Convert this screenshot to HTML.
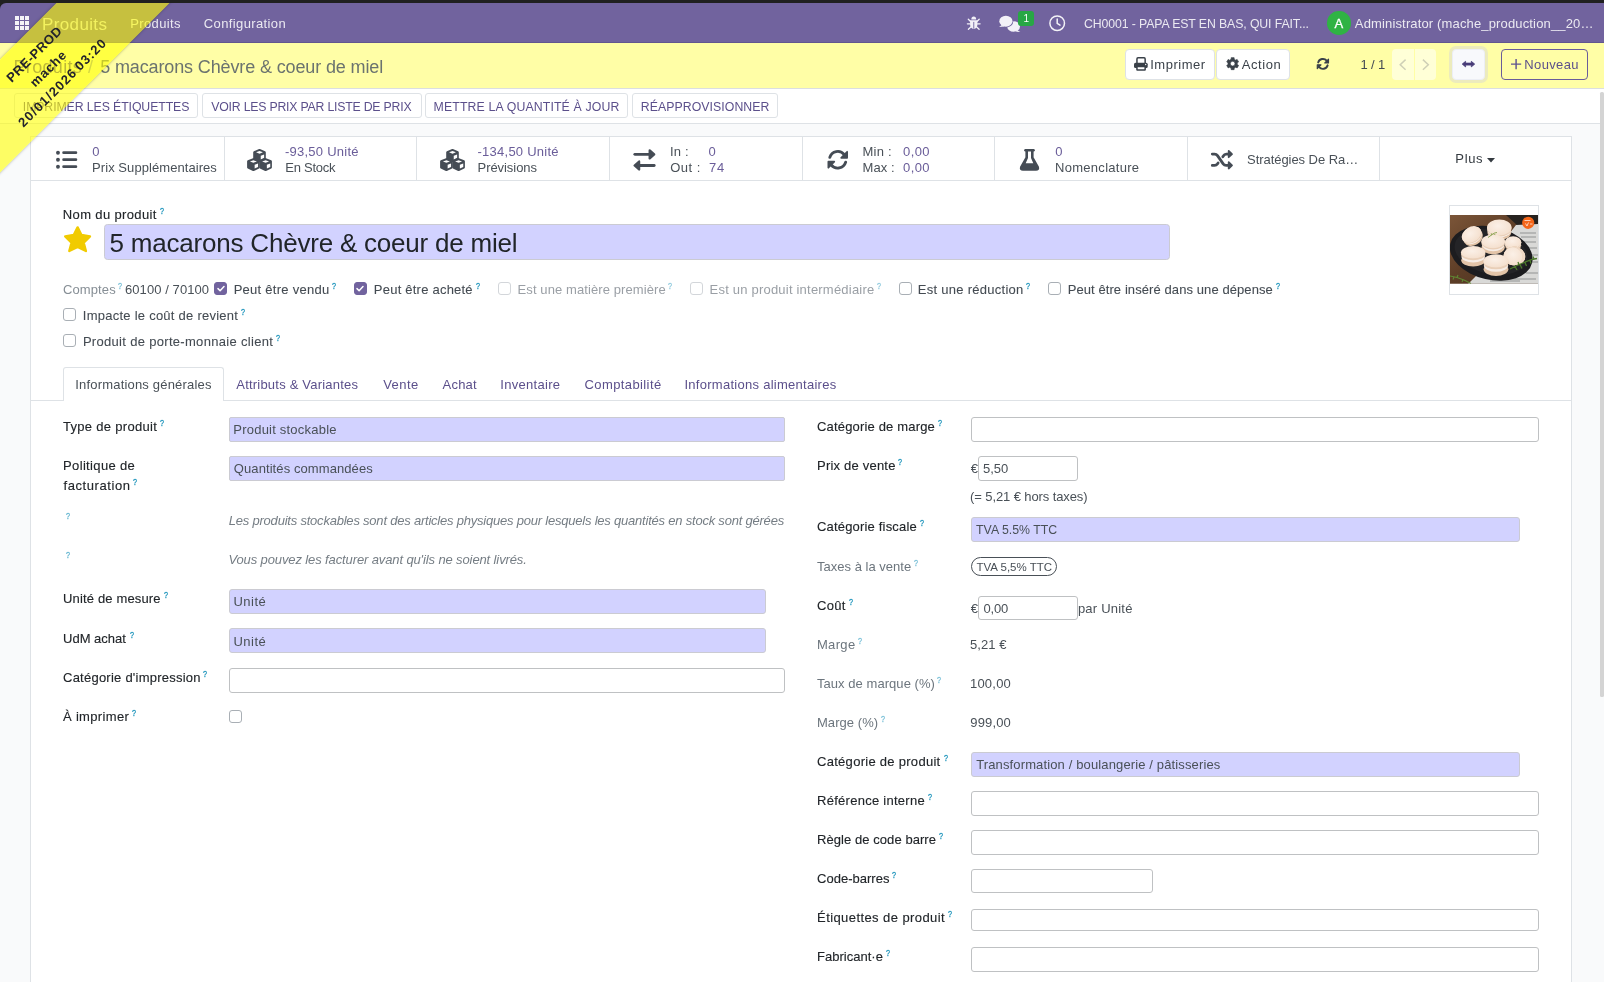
<!DOCTYPE html>
<html lang="fr"><head><meta charset="utf-8"><title>Produits</title>
<style>
*{box-sizing:border-box;margin:0;padding:0}
html,body{width:1604px;height:982px;overflow:hidden;background:#202020}
body{font-family:"Liberation Sans",sans-serif;font-size:13px;color:#495057}
#app{position:absolute;left:0;top:0;width:1604px;height:982px;overflow:hidden;background:#202020}
.a{position:absolute}
.t{position:absolute;white-space:pre;line-height:20px;height:20px}
#nav{left:0;top:3px;width:1604px;height:40px;background:#71639e;border-top-left-radius:6px}
#cp{left:0;top:43px;width:1604px;height:45px;background:#fffea6}
#cpb{left:0;top:88px;width:1604px;height:1px;background:#dcdfe0}
#sb{left:0;top:89px;width:1604px;height:34px;background:#fff}
#sbb{left:0;top:123px;width:1604px;height:1px;background:#dee2e6}
#bg{left:0;top:124px;width:1604px;height:858px;background:#f9fafb}
#sheet{left:30px;top:136px;width:1542px;height:860px;background:#fff;border:1px solid #dee2e6}
.btn{border:1px solid #dee2e6;border-radius:3px;background:#fff}
.sep{width:1px;background:#dee2e6}
.req{background:#d2d2ff;border:1px solid #cbcbd2;border-radius:3px}
.inp{background:#fff;border:1px solid #bfc1c3;border-radius:3px}
.cb{width:13px;height:13px;border:1px solid #a9afb5;border-radius:3px;background:#fff}
.cb.on{background:#71639e;border-color:#71639e}
.cb.dis{border-color:#d3d6da}
svg{position:absolute;overflow:visible}
#tx{position:absolute;left:0;top:0;width:1604px;height:982px;will-change:transform}

</style></head>
<body>
<div id="app">
<div class="a" id="nav"></div>
<div class="a" style="left:0;top:42px;width:1604px;height:1px;background:#62568f"></div>
<div class="a" id="cp"></div>
<div class="a" id="cpb"></div>
<div class="a" id="sb"></div>
<div class="a" id="sbb"></div>
<div class="a" id="bg"></div>
<div class="a" id="sheet"></div>
<!-- scrollbar -->
<div class="a" style="left:1600.400px;top:91.500px;width:3.200px;height:605.500px;background:#d4d4d4;border-radius:1.600px"></div>

<!-- NAV ICONS -->
<svg id="i-apps" style="left:15px;top:16px" width="14" height="14" viewBox="0 0 14 14" fill="#fff" fill-opacity=".92"><rect x="0" y="0" width="4" height="4"/><rect x="5" y="0" width="4" height="4"/><rect x="10" y="0" width="4" height="4"/><rect x="0" y="5" width="4" height="4"/><rect x="5" y="5" width="4" height="4"/><rect x="10" y="5" width="4" height="4"/><rect x="0" y="10" width="4" height="4"/><rect x="5" y="10" width="4" height="4"/><rect x="10" y="10" width="4" height="4"/></svg>
<svg id="i-bug" style="left:966px;top:15px" width="16" height="16" viewBox="966 15 16 16" fill="#f3f1f8" stroke="#f3f1f8" stroke-width="1.300" stroke-linecap="round"><path d="M971.300 19.400a2.450 2.900 0 0 1 4.900 0z" stroke="none"/><path d="M970.100 20.200H977.400V24.500Q977.400 28.200 973.750 29.100Q970.100 28.200 970.100 24.500z" stroke="none"/><path d="M973.750 22.300V28.300" stroke="#71639e" stroke-width=".9"/><path d="M970.600 21.500L968.300 19.300M976.900 21.500L979.200 19.300M970 23.800H967.400M977.500 23.800H980.100M970.900 27L968.400 29.200M976.600 27L979.100 29.200" fill="none"/></svg>
<svg id="i-chat" style="left:998px;top:14px" width="24" height="20" viewBox="998 14 24 20" fill="#f3f1f8"><ellipse cx="1013.600" cy="26.500" rx="6.400" ry="5.300"/><path d="M1017 30L1020.300 31.900L1015.500 31.600z"/><ellipse cx="1005.900" cy="21.200" rx="6.600" ry="5.500" stroke="#71639e" stroke-width="1.600"/><ellipse cx="1005.900" cy="21.200" rx="6.600" ry="5.500"/><path d="M1002 24.800L999.100 26.900L1004.500 26.500z"/></svg>
<div class="a" style="left:1018px;top:10.5px;width:16px;height:15.5px;background:#28a745;border-radius:3px"></div>
<svg id="i-clock" style="left:1049px;top:15px" width="16.400" height="16.400" viewBox="0 0 16.4 16.4" fill="none" stroke="#fff" stroke-opacity=".92" stroke-width="1.500" stroke-linecap="round" stroke-linejoin="round"><circle cx="8.200" cy="8.200" r="7.300"/><path d="M8.200 4v4.400l2.800 1.800"/></svg>
<div class="a" style="left:1327px;top:11.400px;width:23.600px;height:23.600px;border-radius:50%;background:#2fb344"></div>

<!-- CONTROL PANEL BUTTONS -->
<div class="a btn" style="left:1125px;top:49px;width:89.500px;height:31px;border-radius:4px"></div>
<div class="a btn" style="left:1215.500px;top:49px;width:74.500px;height:31px;border-radius:4px"></div>
<svg id="i-print" style="left:1133px;top:56px" width="16" height="16" viewBox="1133 56 16 16" fill="none" stroke="#3a4149" stroke-width="1.500" stroke-linejoin="round"><path d="M1136.950 63V58.900Q1136.950 57.850 1138 57.850H1144.100Q1145.150 57.850 1145.150 58.900V63"/><rect x="1134" y="62.700" width="13.700" height="5.300" rx="1.600" fill="#3a4149" stroke="none"/><rect x="1136.950" y="66.600" width="8.200" height="3.500" rx=".400" fill="#fff"/><circle cx="1145.700" cy="64.500" r=".650" fill="#fff" stroke="none"/></svg>
<svg id="i-cog" style="left:1225.500px;top:57.400px" width="13.300" height="13.300" viewBox="-7 -7 14 14" fill="#3a4149"><path fill-rule="evenodd" stroke="#3a4149" stroke-width=".7" stroke-linejoin="round" d="M-1.59 -4.64L-1.55 -6.31L1.55 -6.31L1.59 -4.64A4.90 4.90 0 0 1 3.22 -3.69L3.22 -3.69L4.70 -4.49L6.24 -1.82L4.81 -0.94A4.90 4.90 0 0 1 4.81 0.94L4.81 0.94L6.24 1.82L4.70 4.49L3.22 3.69A4.90 4.90 0 0 1 1.59 4.64L1.59 4.64L1.55 6.31L-1.55 6.31L-1.59 4.64A4.90 4.90 0 0 1 -3.22 3.69L-3.22 3.69L-4.70 4.49L-6.24 1.82L-4.81 0.94A4.90 4.90 0 0 1 -4.81 -0.94L-4.81 -0.94L-6.24 -1.82L-4.70 -4.49L-3.22 -3.69A4.90 4.90 0 0 1 -1.59 -4.64zM2.50 0A2.50 2.50 0 1 0 -2.50 0A2.50 2.50 0 1 0 2.50 0z"/></svg>
<svg id="i-refresh" style="left:1314.95px;top:56.15px" width="15.80" height="15.80" viewBox="1314.95 56.15 15.80 15.80" fill="none" stroke="#3a4149" stroke-width="1.9" stroke-linecap="round" stroke-linejoin="round"><path d="M1318.12 62.60A4.95 4.95 0 0 1 1326.64 60.87"/><path d="M1327.58 65.50A4.95 4.95 0 0 1 1319.06 67.23"/><path d="M1328.49 59.30V63.14H1324.71z" fill="#3a4149" stroke-width="1.11"/><path d="M1317.21 68.80V64.96H1320.99z" fill="#3a4149" stroke-width="1.11"/></svg>
<div class="a" style="left:1392px;top:49px;width:21.800px;height:31px;background:rgba(255,255,255,.55);border-radius:4px 0 0 4px"></div>
<div class="a" style="left:1414.500px;top:49px;width:21.500px;height:31px;background:rgba(255,255,255,.55);border-radius:0 4px 4px 0"></div>
<svg style="left:1399px;top:58.800px" width="7.500" height="11.400" viewBox="0 0 7.500 11.400" fill="none" stroke="#cfd0b6" stroke-width="1.500"><path d="M6.600 0.600L1.200 5.700l5.400 5.100"/></svg>
<svg style="left:1421.500px;top:58.800px" width="7.500" height="11.400" viewBox="0 0 7.500 11.400" fill="none" stroke="#cfd0b6" stroke-width="1.500"><path d="M0.900 0.600l5.400 5.100-5.400 5.100"/></svg>
<div class="a" style="left:1449.200px;top:46.100px;width:38.700px;height:36.800px;background:#ecebbd;border-radius:7px"></div>
<div class="a" style="left:1452.200px;top:49px;width:32.700px;height:31px;background:#f8f9fc;border:1px solid #eceef5;border-radius:4px"></div>
<svg id="i-arrowsh" style="left:1461px;top:60px" width="15" height="8.500" viewBox="1461 60 15 8.500" fill="#483c78" stroke="#483c78" stroke-width=".8" stroke-linejoin="round"><path d="M1462.200 64.100L1465.600 61.300V63.100H1471.300V61.300L1474.700 64.100L1471.300 66.900V65.100H1465.600V66.900z"/></svg>
<div class="a" style="left:1501px;top:49px;width:87px;height:31px;border:1px solid #6a5d9a;border-radius:4px"></div>
<svg id="i-plus" style="left:1511.300px;top:59.400px" width="10.200" height="10.200" viewBox="0 0 10 10" fill="none" stroke="#5f5390" stroke-width="1.400"><path d="M5 0v10M0 5h10"/></svg>

<!-- STATUS BUTTONS -->
<div class="a btn" style="left:14px;top:93px;width:184px;height:25.400px"></div>
<div class="a btn" style="left:202px;top:93px;width:219.500px;height:25.400px"></div>
<div class="a btn" style="left:425px;top:93px;width:203px;height:25.400px"></div>
<div class="a btn" style="left:632px;top:93px;width:146px;height:25.400px"></div>

<!-- BUTTON BOX -->
<div class="a" style="left:31px;top:180px;width:1540px;height:1px;background:#dee2e6"></div>
<div class="a sep" style="left:224px;top:137px;height:43px"></div>
<div class="a sep" style="left:416px;top:137px;height:43px"></div>
<div class="a sep" style="left:609px;top:137px;height:43px"></div>
<div class="a sep" style="left:801.500px;top:137px;height:43px"></div>
<div class="a sep" style="left:994px;top:137px;height:43px"></div>
<div class="a sep" style="left:1186.500px;top:137px;height:43px"></div>
<div class="a sep" style="left:1379px;top:137px;height:43px"></div>
<svg id="i-list" style="left:55px;top:149px" width="24" height="22" viewBox="55 149 24 22" fill="#454c55" stroke="#454c55" stroke-width="2.700" stroke-linecap="round"><circle cx="57.970" cy="152.7" r="1.950" stroke="none"/><path d="M63.600 152.7H75.900"/><circle cx="57.970" cy="159.7" r="1.950" stroke="none"/><path d="M63.600 159.7H75.900"/><circle cx="57.970" cy="166.7" r="1.950" stroke="none"/><path d="M63.600 166.7H75.900"/></svg>
<svg id="i-cubes1" style="left:246.8px;top:148.6px" width="26" height="23" viewBox="0 0 26 23"><polygon points="12.50,1.10 17.70,3.20 17.70,9.50 12.50,11.90 7.30,9.50 7.30,3.20" fill="#454c55" stroke="#454c55" stroke-width="2.200" stroke-linejoin="round"/><polygon points="12.50,2.05 15.95,3.35 12.50,4.70 9.05,3.35" fill="#fff"/><polygon points="13.75,6.75 17.15,5.45 17.15,8.85 13.75,10.40" fill="#fff"/><polygon points="6.40,10.20 11.60,12.30 11.60,18.60 6.40,21.00 1.20,18.60 1.20,12.30" fill="#454c55" stroke="#454c55" stroke-width="2.200" stroke-linejoin="round"/><polygon points="6.40,11.15 9.85,12.45 6.40,13.80 2.95,12.45" fill="#fff"/><polygon points="7.65,15.85 11.05,14.55 11.05,17.95 7.65,19.50" fill="#fff"/><polygon points="18.60,10.20 23.80,12.30 23.80,18.60 18.60,21.00 13.40,18.60 13.40,12.30" fill="#454c55" stroke="#454c55" stroke-width="2.200" stroke-linejoin="round"/><polygon points="18.60,11.15 22.05,12.45 18.60,13.80 15.15,12.45" fill="#fff"/><polygon points="19.85,15.85 23.25,14.55 23.25,17.95 19.85,19.50" fill="#fff"/></svg>
<svg id="i-cubes2" style="left:439.6px;top:148.6px" width="26" height="23" viewBox="0 0 26 23"><polygon points="12.50,1.10 17.70,3.20 17.70,9.50 12.50,11.90 7.30,9.50 7.30,3.20" fill="#454c55" stroke="#454c55" stroke-width="2.200" stroke-linejoin="round"/><polygon points="12.50,2.05 15.95,3.35 12.50,4.70 9.05,3.35" fill="#fff"/><polygon points="13.75,6.75 17.15,5.45 17.15,8.85 13.75,10.40" fill="#fff"/><polygon points="6.40,10.20 11.60,12.30 11.60,18.60 6.40,21.00 1.20,18.60 1.20,12.30" fill="#454c55" stroke="#454c55" stroke-width="2.200" stroke-linejoin="round"/><polygon points="6.40,11.15 9.85,12.45 6.40,13.80 2.95,12.45" fill="#fff"/><polygon points="7.65,15.85 11.05,14.55 11.05,17.95 7.65,19.50" fill="#fff"/><polygon points="18.60,10.20 23.80,12.30 23.80,18.60 18.60,21.00 13.40,18.60 13.40,12.30" fill="#454c55" stroke="#454c55" stroke-width="2.200" stroke-linejoin="round"/><polygon points="18.60,11.15 22.05,12.45 18.60,13.80 15.15,12.45" fill="#fff"/><polygon points="19.85,15.85 23.25,14.55 23.25,17.95 19.85,19.50" fill="#fff"/></svg>
<svg id="i-exch" style="left:632px;top:148px" width="26" height="24" viewBox="632 148 26 24" fill="#454c55" stroke="#454c55" stroke-linejoin="round" stroke-linecap="round"><path d="M634.800 154.300H649" stroke-width="2.800" fill="none"/><path d="M649.700 150.400L654.200 154.400L649.700 158.400z" stroke-width="2.300"/><path d="M654.200 165.500H640" stroke-width="2.800" fill="none"/><path d="M639.100 161.500L634.600 165.500L639.100 169.500z" stroke-width="2.300"/></svg>
<svg id="i-rf" style="left:825.65px;top:148.00px" width="23.50" height="23.50" viewBox="825.65 148.00 23.50 23.50" fill="none" stroke="#454c55" stroke-width="2.9" stroke-linecap="round" stroke-linejoin="round"><path d="M829.46 157.32A8.3 8.3 0 0 1 843.94 154.64"/><path d="M845.34 162.18A8.3 8.3 0 0 1 830.86 164.86"/><path d="M846.80 151.75V157.80H840.85z" fill="#454c55" stroke-width="1.70"/><path d="M828.00 167.75V161.70H833.95z" fill="#454c55" stroke-width="1.70"/></svg>
<svg id="i-flask" style="left:1018px;top:148px" width="24" height="24" viewBox="1018 148 24 24" stroke-linejoin="round" stroke-linecap="round"><path d="M1025.400 150.200H1033.600" stroke="#454c55" stroke-width="2.400" fill="none"/><path d="M1026.700 151V157.600L1021.300 167.200Q1020.500 169.500 1023 169.500H1036Q1038.500 169.500 1037.700 167.200L1032.300 157.600V151z" fill="#454c55" stroke="#454c55" stroke-width="2.600"/><path d="M1028 151.400V158L1025.700 163.200H1033.300L1031 158V151.400z" fill="#fff"/></svg>
<svg id="i-rand" style="left:1209px;top:148px" width="26" height="24" viewBox="1209 148 26 24" fill="none" stroke="#454c55" stroke-width="2.800" stroke-linecap="round" stroke-linejoin="round"><path d="M1212.300 154.050H1214.600Q1216.400 154.050 1217.500 155.600L1223.200 163.900Q1224.300 165.400 1226.100 165.400H1228.300"/><path d="M1212.300 165.400H1214.600Q1216.400 165.400 1217.400 164L1218.100 163"/><path d="M1222.800 156.800L1223.300 156Q1224.400 154.050 1226.300 154.050H1228.300"/><path d="M1228.700 150.900L1232 154.050L1228.700 157.200z" fill="#454c55" stroke-width="1.800"/><path d="M1228.700 162.200L1232 165.400L1228.700 168.500z" fill="#454c55" stroke-width="1.800"/></svg>
<svg style="left:1486.500px;top:158px" width="8" height="4.500" viewBox="0 0 8 4.500" fill="#343a40"><path d="M0 0h8L4 4.500z"/></svg>

<!-- TITLE -->
<div class="a req" style="left:104px;top:224px;width:1066px;height:36.300px;border-radius:3.500px"></div>
<svg id="i-star" style="left:62px;top:224px" width="32" height="30" viewBox="62 224 32 30"><polygon points="77.6,227.4 81.44,235.03 90,236.4 83.69,242.78 85.9,251.0 77.6,246.9 69.3,251.0 71.51,242.78 65.2,236.4 73.76,235.03" fill="#f1cb00" stroke="#f1cb00" stroke-width="2.400" stroke-linejoin="round"/></svg>
<div class="a" style="left:1449px;top:205px;width:90px;height:90px;border:1px solid #dee2e6;background:#fff"></div>
<svg id="photo" style="left:1450px;top:215px" width="88" height="69" viewBox="0 0 88 69">
<defs><clipPath id="pc"><rect x="0" y="0" width="88" height="68.800"/></clipPath>
<linearGradient id="wood" x1="0" y1="0" x2="1" y2="1"><stop offset="0" stop-color="#7b5538"/><stop offset=".45" stop-color="#5e3e27"/><stop offset="1" stop-color="#47301f"/></linearGradient>
<radialGradient id="mac" cx=".45" cy=".4" r=".75"><stop offset="0" stop-color="#fbf0e7"/><stop offset=".75" stop-color="#f5e1d0"/><stop offset="1" stop-color="#e6cbb3"/></radialGradient></defs>
<g clip-path="url(#pc)">
<rect width="88" height="69" fill="url(#wood)"/>
<polygon points="56,0 88,0 88,13 68,11" fill="#26221f"/>
<polygon points="66,10 88,9 88,69 18,69 30,57" fill="#d9d9d7"/>
<path d="M70 18h16M71 22h15M72 27h14M76 33h11M80 40h8M82 47h6M76 58h12M60 64h26M40 66h30" stroke="#a9aaab" stroke-width="1.300" fill="none"/>
<ellipse cx="41.200" cy="38.200" rx="42" ry="26.500" transform="rotate(13 41.200 38.200)" fill="#1c1c1f"/>
<ellipse cx="41" cy="37" rx="37" ry="22" transform="rotate(13 41 37)" fill="#242427"/>
<g><ellipse cx="49.3" cy="17.0" rx="11.956" ry="8.0" fill="#e3c4a8"/><ellipse cx="49.3" cy="14.975" rx="11.712" ry="7.6" fill="#f7ede6"/><ellipse cx="49.3" cy="13.49" rx="12.2" ry="8.0" fill="#e9cfb8"/><ellipse cx="49.3" cy="12.5" rx="12.2" ry="8.0" fill="url(#mac)"/></g><g transform="rotate(-30 21.5 19.5)"><ellipse cx="21.5" cy="23.1" rx="10.192" ry="7.6" fill="#e3c4a8"/><ellipse cx="21.5" cy="21.48" rx="9.984" ry="7.22" fill="#f7ede6"/><ellipse cx="21.5" cy="20.292" rx="10.4" ry="7.6" fill="#e9cfb8"/><ellipse cx="21.5" cy="19.5" rx="10.4" ry="7.6" fill="url(#mac)"/></g><g><ellipse cx="63.1" cy="30.2" rx="8.036" ry="5.9" fill="#e3c4a8"/><ellipse cx="63.1" cy="28.849999999999998" rx="7.871999999999999" ry="5.605" fill="#f7ede6"/><ellipse cx="63.1" cy="27.86" rx="8.2" ry="5.9" fill="#e9cfb8"/><ellipse cx="63.1" cy="27.2" rx="8.2" ry="5.9" fill="url(#mac)"/></g><g><ellipse cx="43.2" cy="32.3" rx="11.564" ry="6.9" fill="#e3c4a8"/><ellipse cx="43.2" cy="29.6" rx="11.328" ry="6.555" fill="#f7ede6"/><ellipse cx="43.2" cy="27.62" rx="11.8" ry="6.9" fill="#e9cfb8"/><ellipse cx="43.2" cy="26.3" rx="11.8" ry="6.9" fill="url(#mac)"/></g><g transform="rotate(25 65.2 40.8)"><ellipse cx="65.2" cy="40.8" rx="9.995999999999999" ry="9.0" fill="#e3c4a8"/><ellipse cx="65.2" cy="40.8" rx="9.792" ry="8.549999999999999" fill="#f7ede6"/><ellipse cx="65.2" cy="40.8" rx="10.2" ry="9.0" fill="#e9cfb8"/><ellipse cx="65.2" cy="40.8" rx="10.2" ry="9.0" fill="#efd9c6"/></g><g transform="rotate(25 63.0 41.2)"><ellipse cx="63.0" cy="41.2" rx="9.212" ry="8.9" fill="#e3c4a8"/><ellipse cx="63.0" cy="41.2" rx="9.024" ry="8.455" fill="#f7ede6"/><ellipse cx="63.0" cy="41.2" rx="9.4" ry="8.9" fill="#e9cfb8"/><ellipse cx="63.0" cy="41.2" rx="9.4" ry="8.9" fill="url(#mac)"/></g><g><ellipse cx="23.2" cy="45.3" rx="11.956" ry="6.2" fill="#e3c4a8"/><ellipse cx="23.2" cy="41.699999999999996" rx="11.712" ry="5.89" fill="#f7ede6"/><ellipse cx="23.2" cy="39.059999999999995" rx="12.2" ry="6.2" fill="#e9cfb8"/><ellipse cx="23.2" cy="37.3" rx="12.2" ry="6.2" fill="url(#mac)"/></g><g><ellipse cx="46" cy="54.3" rx="12.347999999999999" ry="6.6" fill="#e3c4a8"/><ellipse cx="46" cy="50.519999999999996" rx="12.096" ry="6.27" fill="#f7ede6"/><ellipse cx="46" cy="47.748" rx="12.6" ry="6.6" fill="#e9cfb8"/><ellipse cx="46" cy="45.9" rx="12.6" ry="6.6" fill="url(#mac)"/></g><path d="M38 22.500l3.500-2.500 3-2 2.500-.5M41 20.500l.8-2.200M43.500 18.800l1.800.8" stroke="#86a04c" stroke-width=".9" fill="none"/>
<path d="M60 54l7-3.500 7-3 8-3 5-1M65 51.500l2 3.500M70 49.500l2 4M75 47.500l1.500 3.500M69 50l-1-3M80 45.500l1 3M84 44l-1-2.500" stroke="#4c7a2b" stroke-width="1.300" fill="none"/>
<path d="M0 61l7 1.500 7 2.500 7 3.500M7 62.500l1-2.500M13 64.500l-1 2.500M4 62l-1 2.500" stroke="#5f8733" stroke-width="1.100" fill="none"/>
<circle cx="78.200" cy="7.800" r="6.100" fill="#f4661a"/>
<path d="M74.500 5.500h6M75.500 8.500l1.500 2.500 1.500-3.500M80 9h2.500" stroke="#fff" stroke-opacity=".85" stroke-width=".8" fill="none"/>
</g></svg>

<!-- CHECKBOXES -->
<div class="a cb on" style="left:214px;top:282.100px"></div>
<div class="a cb on" style="left:353.700px;top:282.100px"></div>
<svg style="left:216.500px;top:285.100px" width="8" height="7" viewBox="0 0 8 7" fill="none" stroke="#fff" stroke-width="1.500" stroke-linecap="round" stroke-linejoin="round"><path d="M1 3.600l2.100 2.100L7 1.500"/></svg>
<svg style="left:356.200px;top:285.100px" width="8" height="7" viewBox="0 0 8 7" fill="none" stroke="#fff" stroke-width="1.500" stroke-linecap="round" stroke-linejoin="round"><path d="M1 3.600l2.100 2.100L7 1.500"/></svg>
<div class="a cb dis" style="left:498px;top:282.100px"></div>
<div class="a cb dis" style="left:690px;top:282.100px"></div>
<div class="a cb" style="left:898.800px;top:282.100px"></div>
<div class="a cb" style="left:1047.900px;top:282.100px"></div>
<div class="a cb" style="left:63px;top:308.400px"></div>
<div class="a cb" style="left:63px;top:334.400px"></div>
<div class="a cb" style="left:229px;top:710px"></div>

<!-- TABS -->
<div class="a" style="left:31px;top:400px;width:1540px;height:1px;background:#dee2e6"></div>
<div class="a" style="left:63px;top:366.500px;width:161px;height:34.500px;border:1px solid #dee2e6;border-bottom:none;border-radius:3px 3px 0 0;background:#fff"></div>

<!-- LEFT FIELDS -->
<div class="a req" style="left:229px;top:417px;width:556px;height:24.700px;border-radius:2px"></div>
<div class="a req" style="left:229px;top:456px;width:556px;height:24.700px;border-radius:2px"></div>
<div class="a req" style="left:229px;top:589.200px;width:537px;height:24.600px"></div>
<div class="a req" style="left:229px;top:628.400px;width:537px;height:25px"></div>
<div class="a inp" style="left:229px;top:668px;width:556px;height:24.700px"></div>

<!-- RIGHT FIELDS -->
<div class="a inp" style="left:971px;top:417px;width:568px;height:24.700px"></div>
<div class="a inp" style="left:978px;top:456px;width:100px;height:24.700px"></div>
<div class="a req" style="left:971px;top:517px;width:549px;height:24.700px"></div>
<div class="a" style="left:971px;top:557px;width:86px;height:19px;border:1px solid #495057;border-radius:10px"></div>
<div class="a inp" style="left:978px;top:595.500px;width:100px;height:24.900px"></div>
<div class="a req" style="left:971px;top:751.500px;width:549px;height:25px"></div>
<div class="a inp" style="left:971px;top:791px;width:568px;height:24.700px"></div>
<div class="a inp" style="left:971px;top:830.200px;width:568px;height:24.400px"></div>
<div class="a inp" style="left:971px;top:869.300px;width:182px;height:24.200px"></div>
<div class="a inp" style="left:971px;top:908.500px;width:568px;height:22.200px"></div>
<div class="a inp" style="left:971px;top:947.400px;width:568px;height:24.400px"></div>

<div id="tx">
<span class="t" id="t0" style="left:42.09px;top:15.00px;font-size:17px;color:rgba(255,255,255,.78);letter-spacing:0.348px;">Produits</span>
<span class="t" id="t1" style="left:130.33px;top:14.00px;font-size:13px;color:rgba(255,255,255,.86);letter-spacing:0.345px;">Produits</span>
<span class="t" id="t2" style="left:203.79px;top:14.00px;font-size:13px;color:rgba(255,255,255,.86);letter-spacing:0.383px;">Configuration</span>
<span class="t" id="t3" style="left:1083.97px;top:14.00px;font-size:12.3px;color:rgba(255,255,255,.86);letter-spacing:-0.111px;">CH0001 - PAPA EST EN BAS, QUI FAIT...</span>
<span class="t" id="t4" style="left:1354.85px;top:14.00px;font-size:13px;color:rgba(255,255,255,.86);letter-spacing:0.148px;">Administrator (mache_production__20…</span>
<span class="t" id="t5" style="left:1023.40px;top:9.00px;font-size:10px;color:#fff;">1</span>
<span class="t" id="t6" style="left:1334.40px;top:14.00px;font-size:13px;color:#fff;-webkit-text-stroke:0.3px;">A</span>
<span class="t" id="t7" style="left:13.51px;top:57.00px;font-size:18px;color:#5b4f8b;letter-spacing:0.319px;">Produits</span>
<span class="t" id="t8" style="left:88.10px;top:57.00px;font-size:18px;color:#9aa0a6;">/</span>
<span class="t" id="t9" style="left:100.16px;top:57.00px;font-size:18px;color:#6b736f;letter-spacing:-0.128px;">5 macarons Chèvre &amp; coeur de miel</span>
<span class="t" id="t10" style="left:1150.22px;top:55.00px;font-size:13px;color:#3b424a;letter-spacing:0.505px;">Imprimer</span>
<span class="t" id="t11" style="left:1241.85px;top:55.00px;font-size:13px;color:#3b424a;letter-spacing:0.530px;">Action</span>
<span class="t" id="t12" style="left:1360.51px;top:55.00px;font-size:13px;color:#444b53;letter-spacing:-0.120px;">1 / 1</span>
<span class="t" id="t13" style="left:1524.33px;top:55.00px;font-size:13px;color:#5b4f8b;letter-spacing:0.353px;">Nouveau</span>
<span class="t" id="t14" style="left:22.82px;top:97.00px;font-size:12.3px;color:#5b4f8b;letter-spacing:-0.101px;">IMPRIMER LES ÉTIQUETTES</span>
<span class="t" id="t15" style="left:211.25px;top:97.00px;font-size:12.3px;color:#5b4f8b;letter-spacing:-0.216px;">VOIR LES PRIX PAR LISTE DE PRIX</span>
<span class="t" id="t16" style="left:433.59px;top:97.00px;font-size:12.3px;color:#5b4f8b;letter-spacing:0.137px;">METTRE LA QUANTITÉ À JOUR</span>
<span class="t" id="t17" style="left:640.76px;top:97.00px;font-size:12.3px;color:#5b4f8b;letter-spacing:0.058px;">RÉAPPROVISIONNER</span>
<span class="t" id="t18" style="left:92.33px;top:142.00px;font-size:13px;color:#6a5d99;">0</span>
<span class="t" id="t19" style="left:92.06px;top:158.00px;font-size:13px;color:#495057;letter-spacing:0.065px;">Prix Supplémentaires</span>
<span class="t" id="t20" style="left:284.95px;top:142.00px;font-size:13px;color:#6a5d99;letter-spacing:0.255px;">-93,50 Unité</span>
<span class="t" id="t21" style="left:285.35px;top:158.00px;font-size:13px;color:#495057;letter-spacing:-0.272px;">En Stock</span>
<span class="t" id="t22" style="left:477.50px;top:142.00px;font-size:13px;color:#6a5d99;letter-spacing:0.251px;">-134,50 Unité</span>
<span class="t" id="t23" style="left:477.52px;top:158.00px;font-size:13px;color:#495057;letter-spacing:-0.054px;">Prévisions</span>
<span class="t" id="t24" style="left:670.02px;top:142.00px;font-size:13px;color:#495057;letter-spacing:0.159px;">In :</span>
<span class="t" id="t25" style="left:708.57px;top:142.00px;font-size:13px;color:#6a5d99;">0</span>
<span class="t" id="t26" style="left:670.16px;top:158.00px;font-size:13px;color:#495057;letter-spacing:0.538px;">Out :</span>
<span class="t" id="t27" style="left:708.89px;top:158.00px;font-size:13px;color:#6a5d99;letter-spacing:0.918px;">74</span>
<span class="t" id="t28" style="left:862.55px;top:142.00px;font-size:13px;color:#495057;letter-spacing:0.231px;">Min :</span>
<span class="t" id="t29" style="left:903.12px;top:142.00px;font-size:13px;color:#6a5d99;letter-spacing:0.337px;">0,00</span>
<span class="t" id="t30" style="left:862.55px;top:158.00px;font-size:13px;color:#495057;letter-spacing:0.101px;">Max :</span>
<span class="t" id="t31" style="left:903.12px;top:158.00px;font-size:13px;color:#6a5d99;letter-spacing:0.337px;">0,00</span>
<span class="t" id="t32" style="left:1055.16px;top:142.00px;font-size:13px;color:#6a5d99;">0</span>
<span class="t" id="t33" style="left:1055.12px;top:158.00px;font-size:13px;color:#495057;letter-spacing:0.270px;">Nomenclature</span>
<span class="t" id="t34" style="left:1247.08px;top:150.00px;font-size:13px;color:#495057;letter-spacing:-0.055px;">Stratégies De Ra…</span>
<span class="t" id="t35" style="left:1455.35px;top:149.00px;font-size:13px;color:#343a40;letter-spacing:0.644px;">Plus</span>
<span class="t" id="t36" style="left:62.86px;top:205.00px;font-size:13px;color:#212529;-webkit-text-stroke:0.13px;letter-spacing:0.356px;">Nom du produit</span>
<span class="t" id="t37" style="left:160.20px;top:201.00px;font-size:9.7px;color:#1b93bb;-webkit-text-stroke:0.3px;transform:scaleX(.74);transform-origin:0 0;">?</span>
<span class="t" id="t38" style="left:109.57px;top:233.00px;font-size:26px;color:#212529;letter-spacing:-0.209px;">5 macarons Chèvre &amp; coeur de miel</span>
<span class="t" id="t39" style="left:62.95px;top:280.00px;font-size:13px;color:#868e95;letter-spacing:0.114px;">Comptes</span>
<span class="t" id="t40" style="left:118.00px;top:276.00px;font-size:9.7px;color:#1b93bb;-webkit-text-stroke:0.3px;transform:scaleX(.74);transform-origin:0 0;opacity:0.6;">?</span>
<span class="t" id="t41" style="left:124.98px;top:280.00px;font-size:13px;color:#495057;letter-spacing:0.080px;">60100 / 70100</span>
<span class="t" id="t42" style="left:233.65px;top:280.00px;font-size:13px;color:#444b52;-webkit-text-stroke:0.08px;letter-spacing:0.268px;">Peut être vendu</span>
<span class="t" id="t43" style="left:331.70px;top:276.00px;font-size:9.7px;color:#1b93bb;-webkit-text-stroke:0.3px;transform:scaleX(.74);transform-origin:0 0;">?</span>
<span class="t" id="t44" style="left:373.84px;top:280.00px;font-size:13px;color:#444b52;-webkit-text-stroke:0.08px;letter-spacing:0.225px;">Peut être acheté</span>
<span class="t" id="t45" style="left:475.70px;top:276.00px;font-size:9.7px;color:#1b93bb;-webkit-text-stroke:0.3px;transform:scaleX(.74);transform-origin:0 0;">?</span>
<span class="t" id="t46" style="left:517.55px;top:280.00px;font-size:13px;color:#9a9fa5;letter-spacing:0.092px;">Est une matière première</span>
<span class="t" id="t47" style="left:668.30px;top:276.00px;font-size:9.7px;color:#1b93bb;-webkit-text-stroke:0.3px;transform:scaleX(.74);transform-origin:0 0;opacity:0.5;">?</span>
<span class="t" id="t48" style="left:709.55px;top:280.00px;font-size:13px;color:#9a9fa5;letter-spacing:0.210px;">Est un produit intermédiaire</span>
<span class="t" id="t49" style="left:876.70px;top:276.00px;font-size:9.7px;color:#1b93bb;-webkit-text-stroke:0.3px;transform:scaleX(.74);transform-origin:0 0;opacity:0.5;">?</span>
<span class="t" id="t50" style="left:917.84px;top:280.00px;font-size:13px;color:#444b52;-webkit-text-stroke:0.08px;letter-spacing:0.270px;">Est une réduction</span>
<span class="t" id="t51" style="left:1025.70px;top:276.00px;font-size:9.7px;color:#1b93bb;-webkit-text-stroke:0.3px;transform:scaleX(.74);transform-origin:0 0;">?</span>
<span class="t" id="t52" style="left:1067.65px;top:280.00px;font-size:13px;color:#444b52;-webkit-text-stroke:0.08px;letter-spacing:0.087px;">Peut être inséré dans une dépense</span>
<span class="t" id="t53" style="left:1275.70px;top:276.00px;font-size:9.7px;color:#1b93bb;-webkit-text-stroke:0.3px;transform:scaleX(.74);transform-origin:0 0;">?</span>
<span class="t" id="t54" style="left:82.82px;top:306.00px;font-size:13px;color:#444b52;-webkit-text-stroke:0.08px;letter-spacing:0.249px;">Impacte le coût de revient</span>
<span class="t" id="t55" style="left:240.70px;top:302.00px;font-size:9.7px;color:#1b93bb;-webkit-text-stroke:0.3px;transform:scaleX(.74);transform-origin:0 0;">?</span>
<span class="t" id="t56" style="left:82.88px;top:332.00px;font-size:13px;color:#444b52;-webkit-text-stroke:0.08px;letter-spacing:0.310px;">Produit de porte-monnaie client</span>
<span class="t" id="t57" style="left:275.70px;top:328.00px;font-size:9.7px;color:#1b93bb;-webkit-text-stroke:0.3px;transform:scaleX(.74);transform-origin:0 0;">?</span>
<span class="t" id="t58" style="left:75.22px;top:375.00px;font-size:13px;color:#495057;letter-spacing:0.191px;">Informations générales</span>
<span class="t" id="t59" style="left:236.29px;top:375.00px;font-size:13px;color:#5b4f8b;letter-spacing:0.208px;">Attributs &amp; Variantes</span>
<span class="t" id="t60" style="left:383.14px;top:375.00px;font-size:13px;color:#5b4f8b;letter-spacing:0.450px;">Vente</span>
<span class="t" id="t61" style="left:442.57px;top:375.00px;font-size:13px;color:#5b4f8b;letter-spacing:0.206px;">Achat</span>
<span class="t" id="t62" style="left:500.22px;top:375.00px;font-size:13px;color:#5b4f8b;letter-spacing:0.308px;">Inventaire</span>
<span class="t" id="t63" style="left:584.54px;top:375.00px;font-size:13px;color:#5b4f8b;letter-spacing:0.395px;">Comptabilité</span>
<span class="t" id="t64" style="left:684.44px;top:375.00px;font-size:13px;color:#5b4f8b;letter-spacing:0.273px;">Informations alimentaires</span>
<span class="t" id="t65" style="left:63.04px;top:417.00px;font-size:13px;color:#212529;-webkit-text-stroke:0.13px;letter-spacing:0.294px;">Type de produit</span>
<span class="t" id="t66" style="left:160.20px;top:413.00px;font-size:9.7px;color:#1b93bb;-webkit-text-stroke:0.3px;transform:scaleX(.74);transform-origin:0 0;">?</span>
<span class="t" id="t67" style="left:233.33px;top:420.00px;font-size:13px;color:#495057;letter-spacing:0.213px;">Produit stockable</span>
<span class="t" id="t68" style="left:63.06px;top:456.00px;font-size:13px;color:#212529;-webkit-text-stroke:0.13px;letter-spacing:0.348px;">Politique de</span>
<span class="t" id="t69" style="left:63.52px;top:476.00px;font-size:13px;color:#212529;-webkit-text-stroke:0.13px;letter-spacing:0.571px;">facturation</span>
<span class="t" id="t70" style="left:132.50px;top:472.00px;font-size:9.7px;color:#1b93bb;-webkit-text-stroke:0.3px;transform:scaleX(.74);transform-origin:0 0;">?</span>
<span class="t" id="t71" style="left:233.82px;top:459.00px;font-size:13px;color:#495057;letter-spacing:0.084px;">Quantités commandées</span>
<span class="t" id="t72" style="left:65.70px;top:506.00px;font-size:9.7px;color:#1b93bb;-webkit-text-stroke:0.3px;transform:scaleX(.74);transform-origin:0 0;opacity:0.7;">?</span>
<span class="t" id="t73" style="left:228.77px;top:511.00px;font-size:13px;color:#757d84;font-style:italic;letter-spacing:-0.215px;">Les produits stockables sont des articles physiques pour lesquels les quantités en stock sont gérées</span>
<span class="t" id="t74" style="left:65.70px;top:545.00px;font-size:9.7px;color:#1b93bb;-webkit-text-stroke:0.3px;transform:scaleX(.74);transform-origin:0 0;opacity:0.7;">?</span>
<span class="t" id="t75" style="left:228.44px;top:550.00px;font-size:13px;color:#757d84;font-style:italic;letter-spacing:-0.118px;">Vous pouvez les facturer avant qu'ils ne soient livrés.</span>
<span class="t" id="t76" style="left:63.00px;top:589.00px;font-size:13px;color:#212529;-webkit-text-stroke:0.13px;letter-spacing:0.158px;">Unité de mesure</span>
<span class="t" id="t77" style="left:163.70px;top:585.00px;font-size:9.7px;color:#1b93bb;-webkit-text-stroke:0.3px;transform:scaleX(.74);transform-origin:0 0;">?</span>
<span class="t" id="t78" style="left:233.44px;top:592.00px;font-size:13px;color:#495057;letter-spacing:0.490px;">Unité</span>
<span class="t" id="t79" style="left:63.00px;top:629.00px;font-size:13px;color:#212529;-webkit-text-stroke:0.13px;letter-spacing:0.007px;">UdM achat</span>
<span class="t" id="t80" style="left:129.50px;top:625.00px;font-size:9.7px;color:#1b93bb;-webkit-text-stroke:0.3px;transform:scaleX(.74);transform-origin:0 0;">?</span>
<span class="t" id="t81" style="left:233.44px;top:632.00px;font-size:13px;color:#495057;letter-spacing:0.490px;">Unité</span>
<span class="t" id="t82" style="left:63.04px;top:668.00px;font-size:13px;color:#212529;-webkit-text-stroke:0.13px;letter-spacing:0.237px;">Catégorie d'impression</span>
<span class="t" id="t83" style="left:203.20px;top:664.00px;font-size:9.7px;color:#1b93bb;-webkit-text-stroke:0.3px;transform:scaleX(.74);transform-origin:0 0;">?</span>
<span class="t" id="t84" style="left:62.93px;top:707.00px;font-size:13px;color:#212529;-webkit-text-stroke:0.13px;letter-spacing:0.338px;">À imprimer</span>
<span class="t" id="t85" style="left:131.70px;top:703.00px;font-size:9.7px;color:#1b93bb;-webkit-text-stroke:0.3px;transform:scaleX(.74);transform-origin:0 0;">?</span>
<span class="t" id="t86" style="left:817.04px;top:417.00px;font-size:13px;color:#212529;-webkit-text-stroke:0.13px;letter-spacing:0.167px;">Catégorie de marge</span>
<span class="t" id="t87" style="left:937.70px;top:413.00px;font-size:9.7px;color:#1b93bb;-webkit-text-stroke:0.3px;transform:scaleX(.74);transform-origin:0 0;">?</span>
<span class="t" id="t88" style="left:817.06px;top:456.00px;font-size:13px;color:#212529;-webkit-text-stroke:0.13px;letter-spacing:0.203px;">Prix de vente</span>
<span class="t" id="t89" style="left:898.20px;top:452.00px;font-size:9.7px;color:#1b93bb;-webkit-text-stroke:0.3px;transform:scaleX(.74);transform-origin:0 0;">?</span>
<span class="t" id="t90" style="left:970.63px;top:459.00px;font-size:13px;color:#495057;">€</span>
<span class="t" id="t91" style="left:983.05px;top:459.00px;font-size:13px;color:#495057;letter-spacing:-0.076px;">5,50</span>
<span class="t" id="t92" style="left:970.06px;top:487.00px;font-size:13px;color:#495057;letter-spacing:-0.107px;">(= 5,21 € hors taxes)</span>
<span class="t" id="t93" style="left:817.04px;top:517.00px;font-size:13px;color:#212529;-webkit-text-stroke:0.13px;letter-spacing:0.177px;">Catégorie fiscale</span>
<span class="t" id="t94" style="left:919.70px;top:513.00px;font-size:9.7px;color:#1b93bb;-webkit-text-stroke:0.3px;transform:scaleX(.74);transform-origin:0 0;">?</span>
<span class="t" id="t95" style="left:976.05px;top:520.00px;font-size:12.3px;color:#495057;letter-spacing:0.026px;">TVA 5.5% TTC</span>
<span class="t" id="t96" style="left:816.98px;top:557.00px;font-size:13px;color:#6c757d;letter-spacing:0.015px;">Taxes à la vente</span>
<span class="t" id="t97" style="left:913.70px;top:553.00px;font-size:9.7px;color:#1b93bb;-webkit-text-stroke:0.3px;transform:scaleX(.74);transform-origin:0 0;opacity:0.6;">?</span>
<span class="t" id="t98" style="left:976.39px;top:557.00px;font-size:11.5px;color:#495057;letter-spacing:0.007px;">TVA 5,5% TTC</span>
<span class="t" id="t99" style="left:816.97px;top:596.00px;font-size:13px;color:#212529;-webkit-text-stroke:0.13px;letter-spacing:0.319px;">Coût</span>
<span class="t" id="t100" style="left:848.70px;top:592.00px;font-size:9.7px;color:#1b93bb;-webkit-text-stroke:0.3px;transform:scaleX(.74);transform-origin:0 0;">?</span>
<span class="t" id="t101" style="left:970.63px;top:599.00px;font-size:13px;color:#495057;">€</span>
<span class="t" id="t102" style="left:983.44px;top:599.00px;font-size:13px;color:#495057;letter-spacing:-0.168px;">0,00</span>
<span class="t" id="t103" style="left:1077.89px;top:599.00px;font-size:13px;color:#495057;letter-spacing:0.221px;">par Unité</span>
<span class="t" id="t104" style="left:816.98px;top:635.00px;font-size:13px;color:#6c757d;letter-spacing:0.326px;">Marge</span>
<span class="t" id="t105" style="left:857.70px;top:631.00px;font-size:9.7px;color:#1b93bb;-webkit-text-stroke:0.3px;transform:scaleX(.74);transform-origin:0 0;opacity:0.6;">?</span>
<span class="t" id="t106" style="left:970.05px;top:635.00px;font-size:13px;color:#495057;letter-spacing:0.042px;">5,21 €</span>
<span class="t" id="t107" style="left:816.98px;top:674.00px;font-size:13px;color:#6c757d;letter-spacing:0.052px;">Taux de marque (%)</span>
<span class="t" id="t108" style="left:937.20px;top:670.00px;font-size:9.7px;color:#1b93bb;-webkit-text-stroke:0.3px;transform:scaleX(.74);transform-origin:0 0;opacity:0.6;">?</span>
<span class="t" id="t109" style="left:970.00px;top:674.00px;font-size:13px;color:#495057;letter-spacing:0.207px;">100,00</span>
<span class="t" id="t110" style="left:816.98px;top:713.00px;font-size:13px;color:#6c757d;letter-spacing:0.054px;">Marge (%)</span>
<span class="t" id="t111" style="left:880.70px;top:709.00px;font-size:9.7px;color:#1b93bb;-webkit-text-stroke:0.3px;transform:scaleX(.74);transform-origin:0 0;opacity:0.6;">?</span>
<span class="t" id="t112" style="left:970.31px;top:713.00px;font-size:13px;color:#495057;letter-spacing:0.144px;">999,00</span>
<span class="t" id="t113" style="left:817.04px;top:752.00px;font-size:13px;color:#212529;-webkit-text-stroke:0.13px;letter-spacing:0.282px;">Catégorie de produit</span>
<span class="t" id="t114" style="left:943.70px;top:748.00px;font-size:9.7px;color:#1b93bb;-webkit-text-stroke:0.3px;transform:scaleX(.74);transform-origin:0 0;">?</span>
<span class="t" id="t115" style="left:976.20px;top:755.00px;font-size:13px;color:#495057;letter-spacing:0.132px;">Transformation / boulangerie / pâtisseries</span>
<span class="t" id="t116" style="left:817.06px;top:791.00px;font-size:13px;color:#212529;-webkit-text-stroke:0.13px;letter-spacing:0.265px;">Référence interne</span>
<span class="t" id="t117" style="left:927.70px;top:787.00px;font-size:9.7px;color:#1b93bb;-webkit-text-stroke:0.3px;transform:scaleX(.74);transform-origin:0 0;">?</span>
<span class="t" id="t118" style="left:817.06px;top:830.00px;font-size:13px;color:#212529;-webkit-text-stroke:0.13px;letter-spacing:0.063px;">Règle de code barre</span>
<span class="t" id="t119" style="left:938.70px;top:826.00px;font-size:9.7px;color:#1b93bb;-webkit-text-stroke:0.3px;transform:scaleX(.74);transform-origin:0 0;">?</span>
<span class="t" id="t120" style="left:817.04px;top:869.00px;font-size:13px;color:#212529;-webkit-text-stroke:0.13px;letter-spacing:0.013px;">Code-barres</span>
<span class="t" id="t121" style="left:892.40px;top:865.00px;font-size:9.7px;color:#1b93bb;-webkit-text-stroke:0.3px;transform:scaleX(.74);transform-origin:0 0;">?</span>
<span class="t" id="t122" style="left:817.06px;top:908.00px;font-size:13px;color:#212529;-webkit-text-stroke:0.13px;letter-spacing:0.418px;">Étiquettes de produit</span>
<span class="t" id="t123" style="left:948.00px;top:904.00px;font-size:9.7px;color:#1b93bb;-webkit-text-stroke:0.3px;transform:scaleX(.74);transform-origin:0 0;">?</span>
<span class="t" id="t124" style="left:817.06px;top:947.00px;font-size:13px;color:#212529;-webkit-text-stroke:0.13px;letter-spacing:0.007px;">Fabricant·e</span>
<span class="t" id="t125" style="left:885.70px;top:943.00px;font-size:9.7px;color:#1b93bb;-webkit-text-stroke:0.3px;transform:scaleX(.74);transform-origin:0 0;">?</span>
</div>
<div class="a" id="ribclip" style="left:0;top:3px;width:400px;height:400px;overflow:hidden;pointer-events:none">
<div class="a" id="ribbon" style="left:-102.5px;top:24.9px;width:300px;height:80px;background:rgba(255,255,0,.6);transform:rotate(-45deg);box-shadow:0 0 3px rgba(0,0,0,.3);text-align:center;padding:11.400px 0 8.600px;font-weight:700;color:#23232b;font-size:13px;line-height:20px;letter-spacing:1.2px">
<div style="letter-spacing:.5px">PRE-PROD</div><div style="letter-spacing:.9px">mache</div><div style="word-spacing:-2px">20/01/2026 03:20</div>
</div></div>
<div class="a" style="left:0;top:0;width:1604px;height:3px;background:#202020"></div>

</div>
</body></html>
